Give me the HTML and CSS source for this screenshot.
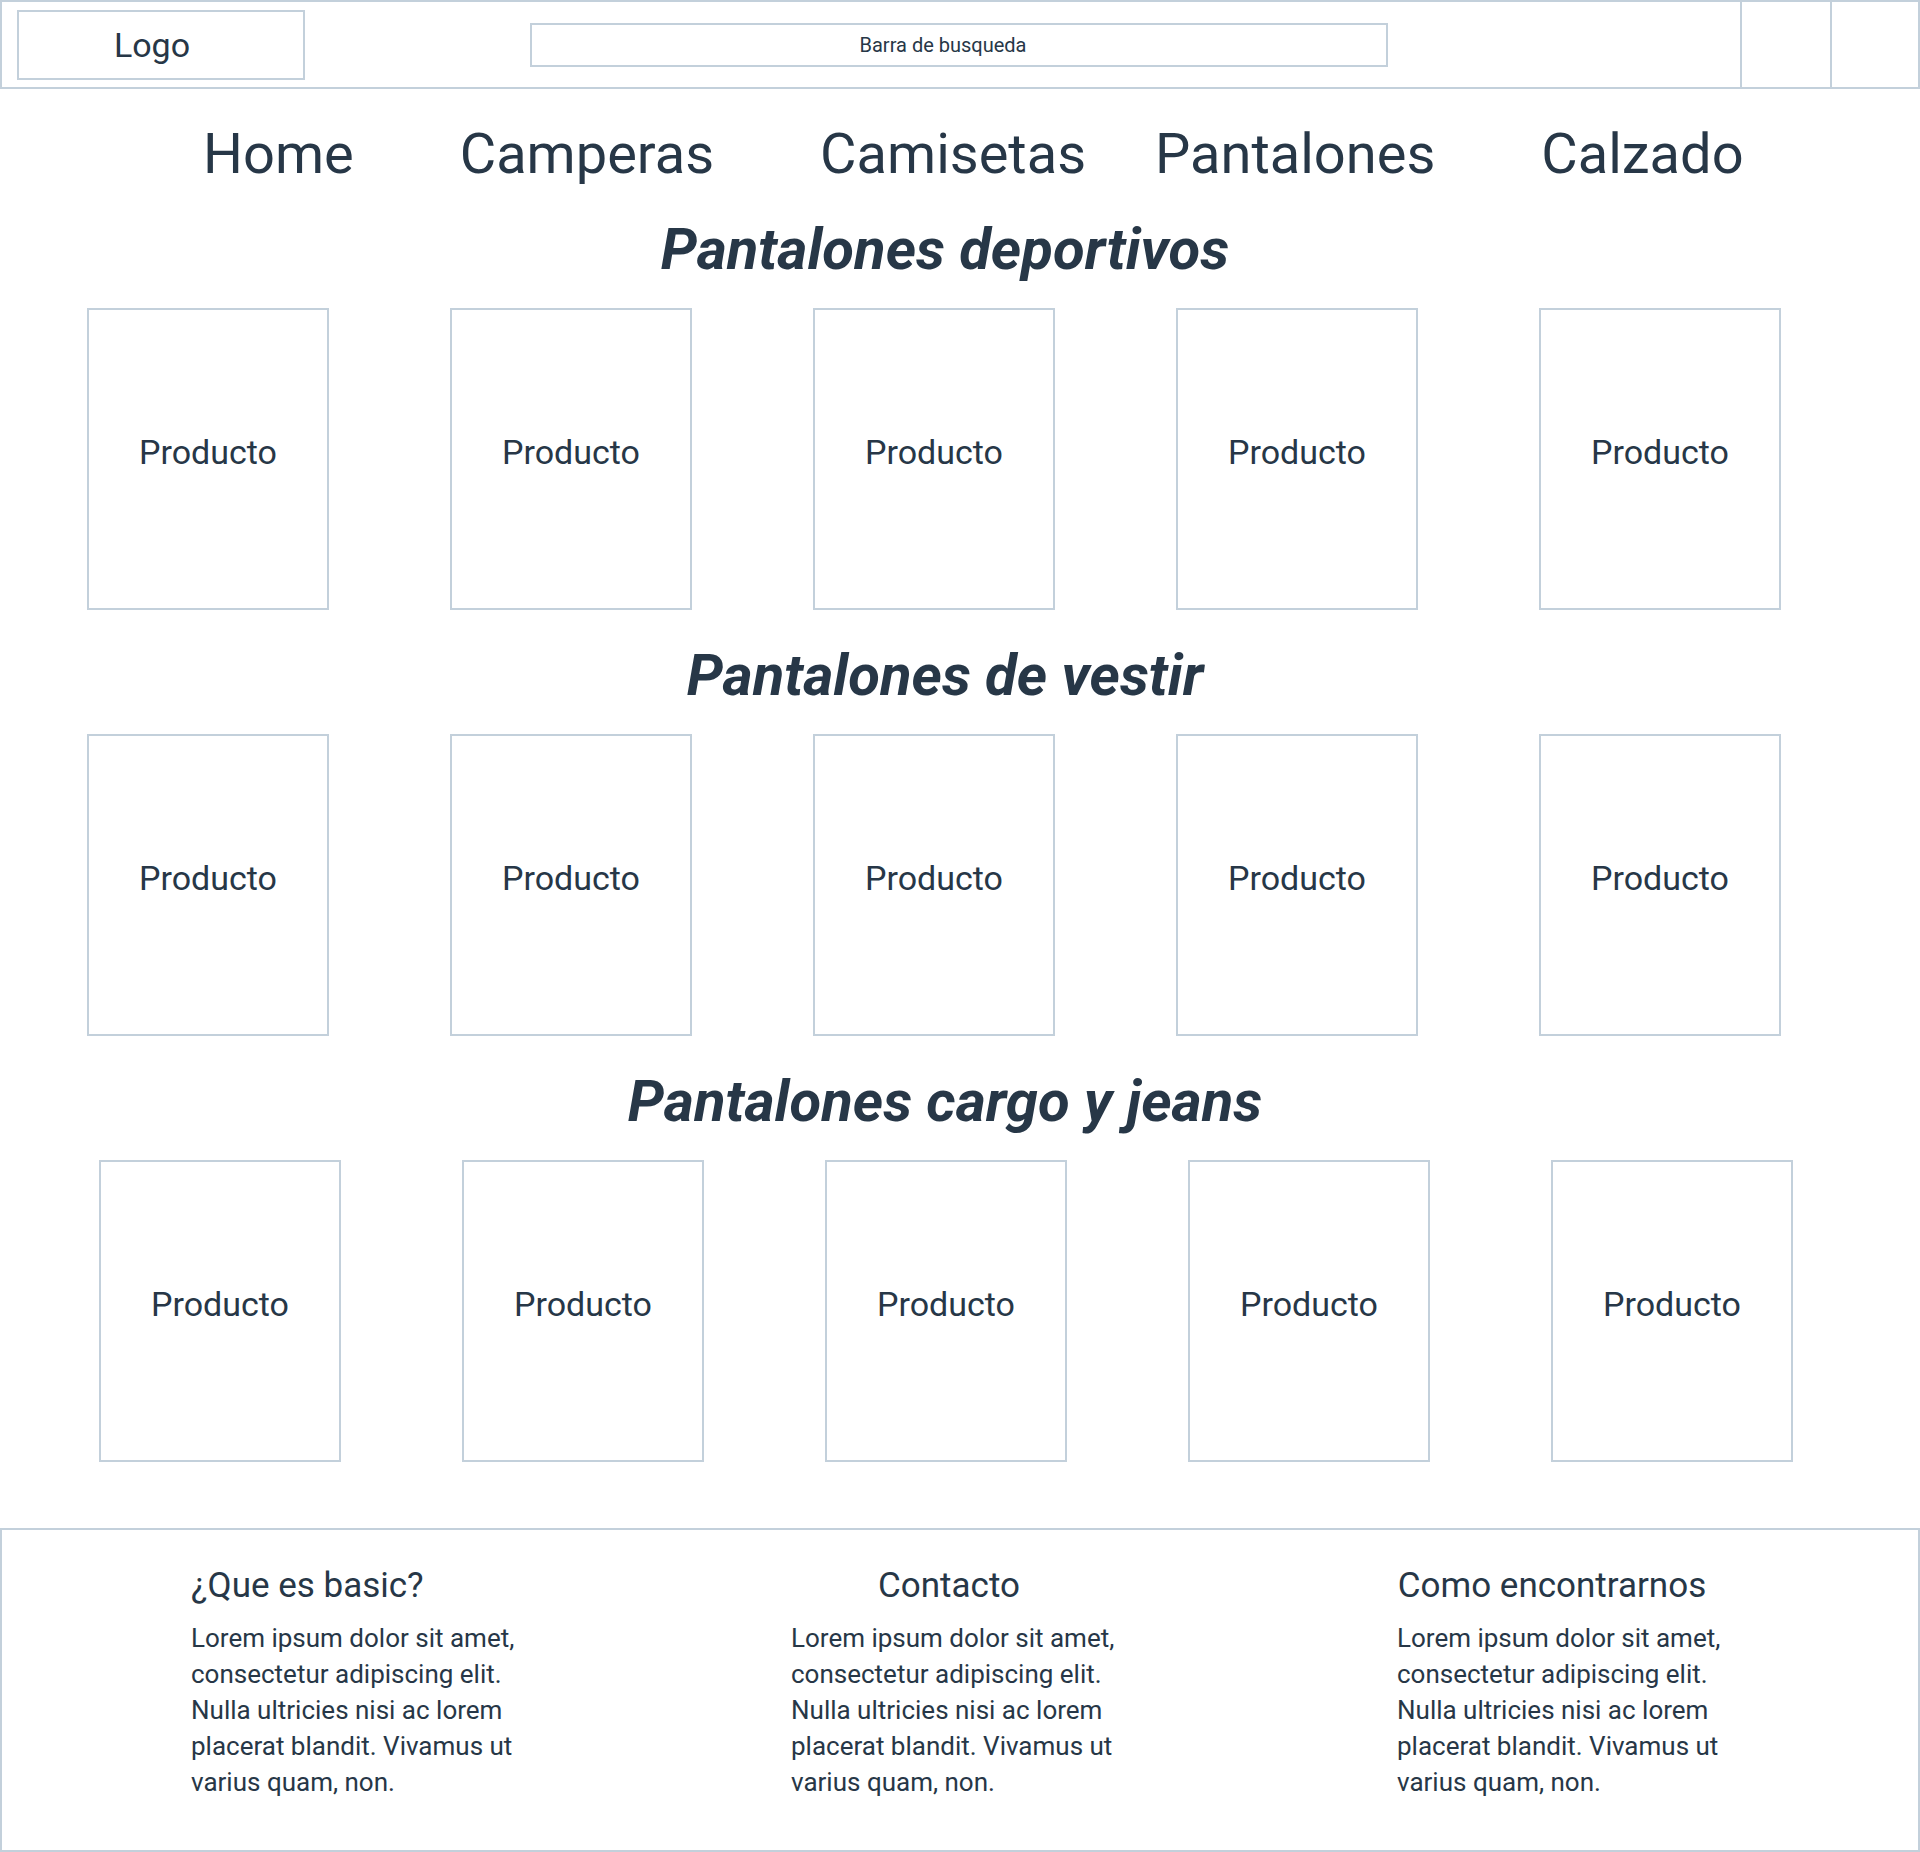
FILE: index.html
```html
<!DOCTYPE html>
<html lang="es">

<head>
    <meta charset="UTF-8">
    <meta name="viewport" content="width=device-width, initial-scale=1.0">
    <title>Basic - Pantalones</title>
    <link rel="stylesheet" href="styles.css">
</head>

<body>
    <header class="topbar">
        <div class="logo">Logo</div>
        <div class="search">Barra de busqueda</div>
        <div class="actions">
            <div class="action-cell"></div>
            <div class="action-cell action-cell--last"></div>
        </div>
    </header>

    <nav class="menu">
        <a href="#">Home</a>
        <a href="#">Camperas</a>
        <a href="#">Camisetas</a>
        <a href="#" class="menu-tight">Pantalones</a>
        <a href="#">Calzado</a>
    </nav>

    <main class="catalog">
        <section class="category">
            <h2 class="category-title">Pantalones deportivos</h2>
            <div class="product-row">
                <div class="product">Producto</div>
                <div class="product">Producto</div>
                <div class="product">Producto</div>
                <div class="product">Producto</div>
                <div class="product">Producto</div>
            </div>
        </section>

        <section class="category">
            <h2 class="category-title">Pantalones de vestir</h2>
            <div class="product-row">
                <div class="product">Producto</div>
                <div class="product">Producto</div>
                <div class="product">Producto</div>
                <div class="product">Producto</div>
                <div class="product">Producto</div>
            </div>
        </section>

        <section class="category">
            <h2 class="category-title">Pantalones cargo y jeans</h2>
            <div class="product-row product-row--shifted">
                <div class="product">Producto</div>
                <div class="product">Producto</div>
                <div class="product">Producto</div>
                <div class="product">Producto</div>
                <div class="product">Producto</div>
            </div>
        </section>
    </main>

    <footer class="site-footer">
        <div class="footer-col footer-col--left">
            <h3>¿Que es basic?</h3>
            <p>Lorem ipsum dolor sit amet, consectetur adipiscing elit. Nulla ultricies nisi ac lorem placerat blandit. Vivamus ut varius quam, non.</p>
        </div>
        <div class="footer-col">
            <h3>Contacto</h3>
            <p>Lorem ipsum dolor sit amet, consectetur adipiscing elit. Nulla ultricies nisi ac lorem placerat blandit. Vivamus ut varius quam, non.</p>
        </div>
        <div class="footer-col">
            <h3>Como encontrarnos</h3>
            <p>Lorem ipsum dolor sit amet, consectetur adipiscing elit. Nulla ultricies nisi ac lorem placerat blandit. Vivamus ut varius quam, non.</p>
        </div>
    </footer>
</body>

</html>
```

FILE: styles.css
```css
* {
    box-sizing: border-box;
}

body {
    margin: 0;
    background: #fff;
    color: #273747;
    font-family: Roboto, "Liberation Sans", sans-serif;
}

/* top bar */
.topbar {
    display: flex;
    align-items: center;
    height: 89px;
    padding-left: 15px;
    border: 2px solid #c3d0db;
}

.logo {
    display: flex;
    align-items: center;
    justify-content: center;
    width: 288px;
    height: 70px;
    padding-right: 18px;
    border: 2px solid #c3d0db;
    font-size: 34px;
}

.search {
    display: flex;
    align-items: center;
    justify-content: center;
    width: 858px;
    height: 44px;
    margin-left: 225px;
    padding-right: 32px;
    border: 2px solid #c3d0db;
    font-size: 20px;
}

.actions {
    display: flex;
    align-self: stretch;
    margin-left: auto;
}

.action-cell {
    width: 90px;
    border-left: 2px solid #c3d0db;
}

.action-cell--last {
    width: 88px;
}

/* menu */
.menu {
    display: flex;
    gap: 106px;
    padding: 37px 0 2px 203px;
    font-size: 56px;
    line-height: 1;
}

.menu a {
    color: inherit;
    text-decoration: none;
}

.menu .menu-tight {
    margin-left: -37px;
}

/* products */
.catalog {
    padding-bottom: 66px;
}

.category-title {
    margin: 36px 0 30px;
    padding-right: 30px;
    font-size: 58px;
    font-weight: 700;
    font-style: italic;
    line-height: 1;
    text-align: center;
}

.product-row {
    display: flex;
    gap: 121px;
    padding-left: 87px;
}

.product-row--shifted {
    padding-left: 99px;
}

.product {
    display: flex;
    align-items: center;
    justify-content: center;
    width: 242px;
    height: 302px;
    padding-bottom: 14px;
    border: 2px solid #c3d0db;
    font-size: 34px;
    line-height: 1;
}

/* footer */
.site-footer {
    display: grid;
    grid-template-columns: 340px 346px 340px;
    column-gap: 260px;
    align-content: start;
    height: 324px;
    padding: 38px 0 0 189px;
    border: 2px solid #c3d0db;
}

.footer-col h3 {
    margin: 0 0 17px;
    padding-right: 30px;
    font-size: 35px;
    font-weight: 400;
    line-height: 1;
    text-align: center;
}

.footer-col--left h3 {
    text-align: left;
}

.footer-col p {
    margin: 0;
    font-size: 26px;
    line-height: 36px;
}
```
